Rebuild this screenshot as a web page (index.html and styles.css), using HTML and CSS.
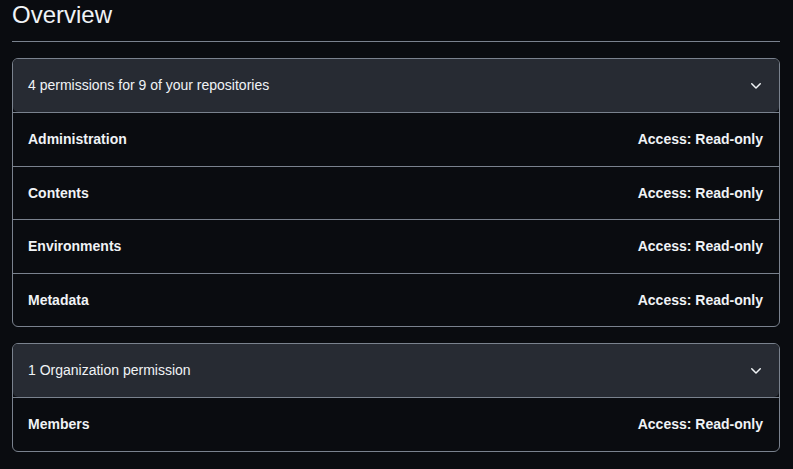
FILE: index.html
```html
<!DOCTYPE html>
<html lang="en">
<head>
<meta charset="utf-8">
<title>Overview</title>
<link rel="stylesheet" href="styles.css">
</head>
<body>
<main class="page">
  <h2 class="title">Overview</h2>

  <section class="box">
    <div class="box-header">
      <span>4 permissions for 9 of your repositories</span>
      <svg class="chevron" width="16" height="16" viewBox="0 0 16 16" aria-hidden="true"><path fill="currentColor" d="M12.78 5.22a.749.749 0 0 1 0 1.06l-4.25 4.25a.749.749 0 0 1-1.06 0L3.22 6.28a.749.749 0 1 1 1.06-1.06L8 8.94l3.72-3.72a.749.749 0 0 1 1.06 0Z"/></svg>
    </div>
    <ul class="rows">
      <li class="row"><span>Administration</span><span>Access: Read-only</span></li>
      <li class="row"><span>Contents</span><span>Access: Read-only</span></li>
      <li class="row"><span>Environments</span><span>Access: Read-only</span></li>
      <li class="row"><span>Metadata</span><span>Access: Read-only</span></li>
    </ul>
  </section>

  <section class="box">
    <div class="box-header">
      <span>1 Organization permission</span>
      <svg class="chevron" width="16" height="16" viewBox="0 0 16 16" aria-hidden="true"><path fill="currentColor" d="M12.78 5.22a.749.749 0 0 1 0 1.06l-4.25 4.25a.749.749 0 0 1-1.06 0L3.22 6.28a.749.749 0 1 1 1.06-1.06L8 8.94l3.72-3.72a.749.749 0 0 1 1.06 0Z"/></svg>
    </div>
    <ul class="rows">
      <li class="row"><span>Members</span><span>Access: Read-only</span></li>
    </ul>
  </section>
</main>
</body>
</html>
```

FILE: styles.css
```css
html, body {
  margin: 0;
  padding: 0;
  background: #0a0c10;
  color: #f0f3f6;
  font-family: "Liberation Sans", Arial, sans-serif;
  font-size: 14px;
}

.page {
  padding: 0 13px 0 12px;
}

.title {
  margin: 0 0 16px 0;
  padding: 0 0 11px 0;
  font-size: 24px;
  font-weight: 400;
  line-height: 30px;
  border-bottom: 1px solid #7a828e;
}

.box {
  border: 1px solid #7a828e;
  border-radius: 6px;
  margin-bottom: 16px;
}

.box-header {
  display: flex;
  align-items: center;
  justify-content: space-between;
  padding: 16px 15px 16px 15px;
  line-height: 21px;
  background: #272b33;
  border-radius: 5px;
}

.chevron {
  display: block;
  color: #f0f3f6;
}

.rows {
  list-style: none;
  margin: 0;
  padding: 0;
  border-top: 1px solid #7a828e;
}

.row {
  display: flex;
  justify-content: space-between;
  padding: 16px 16px 16px 15px;
  line-height: 20.5px;
  font-weight: 700;
}

.row + .row {
  border-top: 1px solid #7a828e;
}
```
